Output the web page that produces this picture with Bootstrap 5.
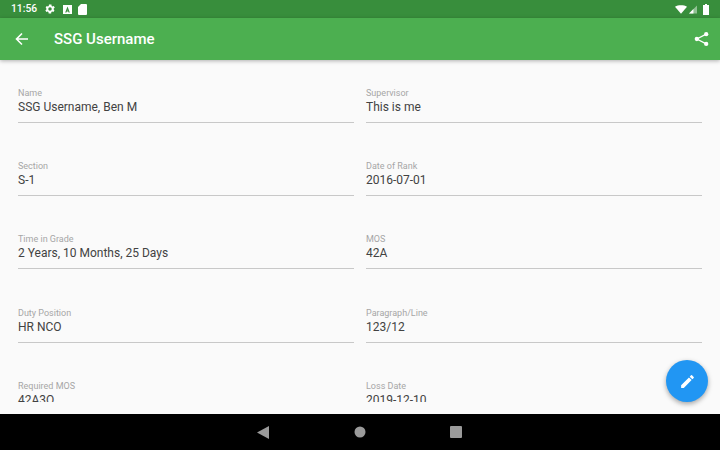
<!DOCTYPE html>
<html lang="en">

<head>
    <meta charset="UTF-8">
    <title>SSG Username</title>
    <link href="https://cdn.jsdelivr.net/npm/bootstrap@5.3.0/dist/css/bootstrap.min.css" rel="stylesheet">
    <style>
        html, body { height: 100%; overflow: hidden; }
        body { font-family: Roboto, "Liberation Sans", sans-serif; background: #fafafa; }
        .app-screen { width: 720px; height: 450px; }
        .status-strip { height: 18px; background: #388e3c; color: #fff; font-size: 10.3px; font-weight: 500; padding: 0 11px; }
        .status-left { margin-left: 7px; gap: 6.5px; }
        .status-right { gap: 2px; }
        .app-bar { height: 42px; background: #4caf50; color: #fff; padding: 0 11px 0 14px; box-shadow: 0 1px 4px rgba(0,0,0,.3); position: relative; z-index: 1; }
        .app-title { font-size: 15px; font-weight: 500; margin-left: 24px; }
        .body-pane { height: 354px; padding-bottom: 12px; background: #fafafa; }
        .field-grid { height: 342px; overflow: hidden; padding: 27px 18px 0; display: grid; grid-template-columns: 336px 336px; column-gap: 12px; grid-auto-rows: 73.2px; }
        .field-label { font-size: 9px; line-height: 12px; color: #a6a6a6; }
        .field-value { font-size: 12px; line-height: 16px; color: #424242; padding-bottom: 7px; border-bottom: 1px solid #c8c8c8; }
        .edit-fab { position: absolute; left: 666px; top: 360px; width: 42px; height: 42px; border-radius: 50%; background: #2196f3; box-shadow: 0 2px 5px rgba(0,0,0,.35); }
        .nav-strip { height: 36px; background: #000; padding-left: 257px; gap: 84.500px; }
    </style>
</head>

<body>
    <div class="app-screen position-relative">
        <div class="status-strip d-flex align-items-center">
            <span>11:56</span>
            <div class="status-left d-flex align-items-center">
                <!-- settings -->
                <svg width="12" height="12" viewBox="0 0 24 24"><path fill="#fff" fill-rule="evenodd" d="M19.400 13a7.500 7.500 0 0 0 0-2l2.100-1.600-2-3.500-2.500 1a7.600 7.600 0 0 0-1.700-1l-.4-2.700h-5l-.4 2.700a7.600 7.600 0 0 0-1.700 1l-2.500-1-2 3.500L4.800 11a7.500 7.500 0 0 0 0 2l-2.100 1.600 2 3.500 2.500-1c.5.4 1.100.7 1.700 1l.4 2.700h5l.4-2.700c.6-.3 1.200-.6 1.700-1l2.500 1 2-3.500zM12 15.500a3.500 3.500 0 1 1 0-7 3.500 3.500 0 0 1 0 7z"/></svg>
                <!-- A box -->
                <svg width="9" height="9" viewBox="0 0 9 9"><rect width="9" height="9" fill="#fff"/><path fill="#388e3c" d="M4.500 1.500 2.200 7.500h1.200l.4-1h1.400l.4 1h1.200zM4.200 5.600l.3-1 .3 1z"/></svg>
                <!-- sd card -->
                <svg width="9" height="11" viewBox="0 0 9 11"><path fill="#fff" d="M3 0h5a1 1 0 0 1 1 1v9a1 1 0 0 1-1 1H1a1 1 0 0 1-1-1V3z"/></svg>
            </div>
            <div class="status-right d-flex align-items-center ms-auto">
                <svg width="12" height="9" viewBox="0 0 13 9"><path fill="#fff" d="M0 1.500C3.700-.5 9.300-.5 13 1.500L6.500 9z"/></svg>
                <svg width="8" height="9" viewBox="0 0 9 9"><path fill="#fff" opacity=".45" d="M9 0v9H0z"/><path fill="#fff" d="M5 4v5H0z"/></svg>
                <svg width="6" height="11" viewBox="0 0 6 11" class="ms-1"><path fill="#fff" d="M2 0h2v1h2v10H0V1h2z"/></svg>
            </div>
        </div>

        <div class="app-bar d-flex align-items-center">
            <svg width="16" height="16" viewBox="0 0 16 16"><path fill="none" stroke="#fff" stroke-width="1.600" d="M14 8H2.500M8 2.500 2.500 8 8 13.500"/></svg>
            <span class="app-title">SSG Username</span>
            <svg width="15" height="16" viewBox="0 0 16 16" class="ms-auto"><g fill="#fff"><circle cx="13" cy="2.800" r="2.300"/><circle cx="3" cy="8" r="2.300"/><circle cx="13" cy="13.200" r="2.300"/></g><path fill="none" stroke="#fff" stroke-width="1.300" d="M13 2.800 3 8l10 5.200"/></svg>
        </div>

        <div class="body-pane">
            <div class="field-grid" id="fields"></div>
        </div>

        <div class="edit-fab d-flex align-items-center justify-content-center">
            <svg width="17" height="17" viewBox="0 0 24 24"><path fill="#fff" d="M3 17.250V21h3.750L17.810 9.940l-3.750-3.750zM20.710 7.040a1 1 0 0 0 0-1.410l-2.340-2.340a1 1 0 0 0-1.410 0l-1.830 1.830 3.750 3.750z"/></svg>
        </div>

        <div class="nav-strip d-flex align-items-center">
            <svg width="12" height="13" viewBox="0 0 12 13"><path fill="#9a9a9a" d="M12 0v13L0 6.500z"/></svg>
            <svg width="12" height="12" viewBox="0 0 12 12"><circle cx="6" cy="6" r="5.500" fill="#9a9a9a"/></svg>
            <svg width="12" height="12" viewBox="0 0 12 12"><rect width="12" height="12" rx="1" fill="#9a9a9a"/></svg>
        </div>
    </div>

    <script src="https://cdn.jsdelivr.net/npm/bootstrap@5.3.0/dist/js/bootstrap.bundle.min.js"></script>
    <script>
        const fields = [
            ["Name", "SSG Username, Ben M"], ["Supervisor", "This is me"],
            ["Section", "S-1"], ["Date of Rank", "2016-07-01"],
            ["Time in Grade", "2 Years, 10 Months, 25 Days"], ["MOS", "42A"],
            ["Duty Position", "HR NCO"], ["Paragraph/Line", "123/12"],
            ["Required MOS", "42A3O"], ["Loss Date", "2019-12-10"]
        ];
        const grid = document.getElementById("fields");
        fields.forEach(f => {
            const div = document.createElement("div");
            div.innerHTML = `<div class="field-label">${f[0]}</div><div class="field-value">${f[1]}</div>`;
            grid.appendChild(div);
        });
    </script>
</body>

</html>
